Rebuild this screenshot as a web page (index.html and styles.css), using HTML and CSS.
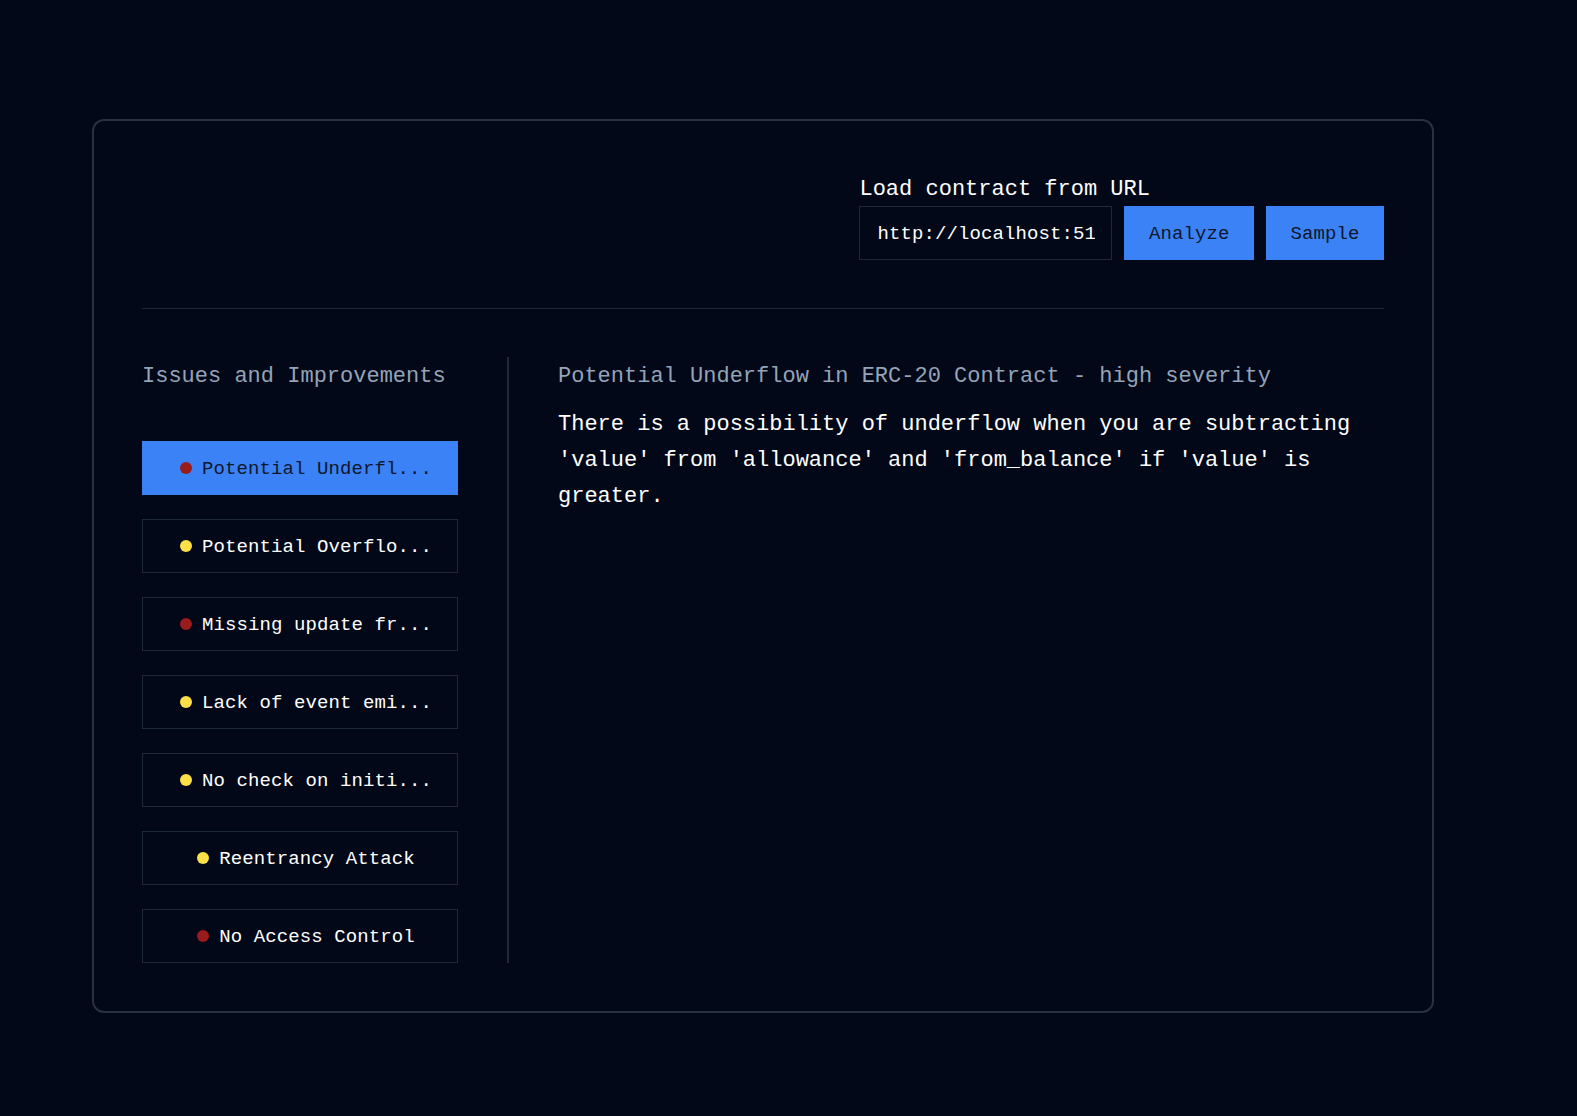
FILE: index.html
```html
<!DOCTYPE html>
<html lang="en">
<head>
<meta charset="utf-8">
<title>Contract Analyzer</title>
<link rel="stylesheet" href="styles.css">
</head>
<body>
<main class="card">
  <header class="top">
    <div class="loader">
      <label class="loader-label" for="url">Load contract from URL</label>
      <div class="loader-row">
        <input id="url" class="url-input" type="text" value="http://localhost:5173/contracts/erc20.vy">
        <button class="btn">Analyze</button>
        <button class="btn">Sample</button>
      </div>
    </div>
  </header>
  <section class="body">
    <aside class="issues">
      <h2 class="section-title">Issues and Improvements</h2>
      <ul class="issue-list">
        <li class="issue active"><span class="dot high"></span><span class="issue-text">Potential Underfl...</span></li>
        <li class="issue"><span class="dot medium"></span><span class="issue-text">Potential Overflo...</span></li>
        <li class="issue"><span class="dot high"></span><span class="issue-text">Missing update fr...</span></li>
        <li class="issue"><span class="dot medium"></span><span class="issue-text">Lack of event emi...</span></li>
        <li class="issue"><span class="dot medium"></span><span class="issue-text">No check on initi...</span></li>
        <li class="issue"><span class="dot medium"></span><span class="issue-text">Reentrancy Attack</span></li>
        <li class="issue"><span class="dot high"></span><span class="issue-text">No Access Control</span></li>
      </ul>
    </aside>
    <article class="detail">
      <h2 class="section-title">Potential Underflow in ERC-20 Contract - high severity</h2>
      <p class="detail-text">There is a possibility of underflow when you are subtracting 'value' from 'allowance' and 'from_balance' if 'value' is greater.</p>
    </article>
  </section>
</main>
</body>
</html>
```

FILE: styles.css
```css
* {
  box-sizing: border-box;
}

html, body {
  margin: 0;
  padding: 0;
  background: #020817;
}

body {
  min-height: 1116px;
  font-family: "Liberation Mono", "DejaVu Sans Mono", monospace;
  color: #f8fafc;
  padding-top: 119px;
  padding-left: 92px;
}

.card {
  width: 1342px;
  border: 2px solid #283141;
  border-radius: 12px;
  padding: 48px;
}

.top {
  display: flex;
  justify-content: flex-end;
  padding-bottom: 48px;
  border-bottom: 1px solid #1e293b;
}

.loader {
  display: flex;
  flex-direction: column;
}

.loader-label {
  display: block;
  height: 37px;
  padding-top: 3px;
  font-size: 22px;
  line-height: 36px;
  color: #ffffff;
}

.loader-row {
  display: flex;
  gap: 12px;
}

.url-input {
  width: 253px;
  height: 54px;
  padding: 2px 16px 0 17px;
  background: #020817;
  border: 1px solid #1e293b;
  color: #ffffff;
  font-family: inherit;
  font-size: 19px;
  letter-spacing: 0.1px;
  outline: none;
}

.btn {
  height: 54px;
  padding: 2px 24.5px 0;
  border: none;
  background: #3b82f6;
  color: #0f172a;
  font-family: inherit;
  font-size: 19px;
  letter-spacing: 0.1px;
  cursor: pointer;
}

.body {
  display: flex;
  margin-top: 48px;
}

.issues {
  width: 367px;
  padding-right: 49px;
  border-right: 2px solid #1e293b;
  flex: none;
}

.section-title {
  margin: 0;
  height: 36px;
  padding-top: 2px;
  font-size: 22px;
  line-height: 36px;
  font-weight: normal;
  color: #94a3b8;
}

.issue-list {
  list-style: none;
  margin: 48px 0 0;
  padding: 0;
  display: flex;
  flex-direction: column;
  gap: 24px;
}

.issue {
  height: 54px;
  display: flex;
  align-items: center;
  justify-content: center;
  gap: 10px;
  padding-left: 12px;
  border: 1px solid #1e293b;
  font-size: 19px;
  letter-spacing: 0.1px;
  color: #ffffff;
}

.issue-text {
  padding-top: 2px;
}

.issue.active {
  background: #3b82f6;
  border-color: #3b82f6;
  color: #0f172a;
}

.dot {
  width: 12px;
  height: 12px;
  border-radius: 50%;
  flex: none;
}

.dot.high {
  background: #991b1b;
}

.dot.medium {
  background: #fde047;
}

.detail {
  flex: 1;
  padding-left: 49px;
}

.detail-text {
  margin: 14px 0 0;
  font-size: 22px;
  line-height: 36px;
  color: #ffffff;
}
```
